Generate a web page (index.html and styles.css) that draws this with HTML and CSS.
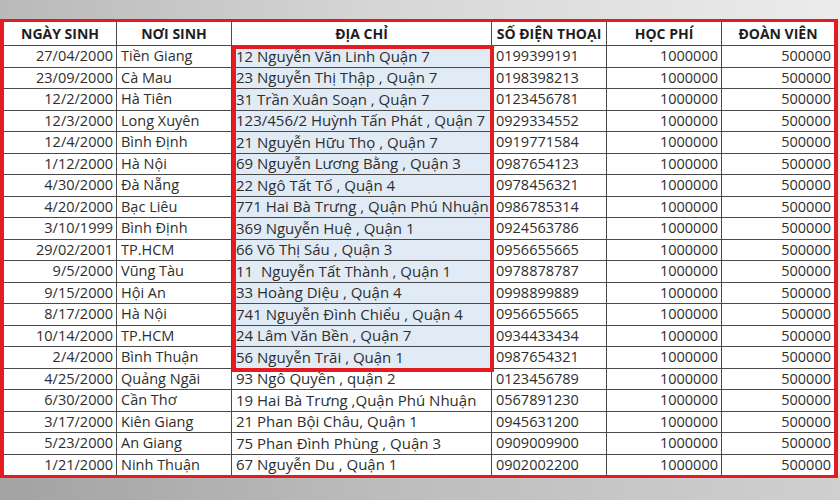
FILE: index.html
```html
<!DOCTYPE html>
<html lang="vi">
<head>
<meta charset="utf-8">
<title>Danh sách</title>
<link rel="stylesheet" href="styles.css">
</head>
<body>
<div class="page">
  <div class="frame">
    <div class="sheet">
      <div class="cell head">NGÀY SINH</div>
      <div class="cell head">NƠI SINH</div>
      <div class="cell head">ĐỊA CHỈ</div>
      <div class="cell head">SỐ ĐIỆN THOẠI</div>
      <div class="cell head">HỌC PHÍ</div>
      <div class="cell head">ĐOÀN VIÊN</div>

      <div class="cell num">27/04/2000</div><div class="cell">Tiền Giang</div><div class="cell addr hl">12 Nguyễn Văn Linh Quận 7</div><div class="cell">0199399191</div><div class="cell num">1000000</div><div class="cell num">500000</div>
      <div class="cell num">23/09/2000</div><div class="cell">Cà Mau</div><div class="cell addr hl">23 Nguyễn Thị Thập , Quận 7</div><div class="cell">0198398213</div><div class="cell num">1000000</div><div class="cell num">500000</div>
      <div class="cell num">12/2/2000</div><div class="cell">Hà Tiên</div><div class="cell addr hl">31 Trần Xuân Soạn , Quận 7</div><div class="cell">0123456781</div><div class="cell num">1000000</div><div class="cell num">500000</div>
      <div class="cell num">12/3/2000</div><div class="cell">Long Xuyên</div><div class="cell addr hl">123/456/2 Huỳnh Tấn Phát , Quận 7</div><div class="cell">0929334552</div><div class="cell num">1000000</div><div class="cell num">500000</div>
      <div class="cell num">12/4/2000</div><div class="cell">Bình Định</div><div class="cell addr hl">21 Nguyễn Hữu Thọ , Quận 7</div><div class="cell">0919771584</div><div class="cell num">1000000</div><div class="cell num">500000</div>
      <div class="cell num">1/12/2000</div><div class="cell">Hà Nội</div><div class="cell addr hl">69 Nguyễn Lương Bằng , Quận 3</div><div class="cell">0987654123</div><div class="cell num">1000000</div><div class="cell num">500000</div>
      <div class="cell num">4/30/2000</div><div class="cell">Đà Nẵng</div><div class="cell addr hl">22 Ngô Tất Tố , Quận 4</div><div class="cell">0978456321</div><div class="cell num">1000000</div><div class="cell num">500000</div>
      <div class="cell num">4/20/2000</div><div class="cell">Bạc Liêu</div><div class="cell addr hl">771 Hai Bà Trưng , Quận Phú Nhuận</div><div class="cell">0986785314</div><div class="cell num">1000000</div><div class="cell num">500000</div>
      <div class="cell num">3/10/1999</div><div class="cell">Bình Định</div><div class="cell addr hl">369 Nguyễn Huệ , Quận 1</div><div class="cell">0924563786</div><div class="cell num">1000000</div><div class="cell num">500000</div>
      <div class="cell num">29/02/2001</div><div class="cell">TP.HCM</div><div class="cell addr hl">66 Võ Thị Sáu , Quận 3</div><div class="cell">0956655665</div><div class="cell num">1000000</div><div class="cell num">500000</div>
      <div class="cell num">9/5/2000</div><div class="cell">Vũng Tàu</div><div class="cell addr hl">11&nbsp; Nguyễn Tất Thành , Quận 1</div><div class="cell">0978878787</div><div class="cell num">1000000</div><div class="cell num">500000</div>
      <div class="cell num">9/15/2000</div><div class="cell">Hội An</div><div class="cell addr hl">33 Hoàng Diệu , Quận 4</div><div class="cell">0998899889</div><div class="cell num">1000000</div><div class="cell num">500000</div>
      <div class="cell num">8/17/2000</div><div class="cell">Hà Nội</div><div class="cell addr hl">741 Nguyễn Đình Chiểu , Quận 4</div><div class="cell">0956655665</div><div class="cell num">1000000</div><div class="cell num">500000</div>
      <div class="cell num">10/14/2000</div><div class="cell">TP.HCM</div><div class="cell addr hl">24 Lâm Văn Bền , Quận 7</div><div class="cell">0934433434</div><div class="cell num">1000000</div><div class="cell num">500000</div>
      <div class="cell num">2/4/2000</div><div class="cell">Bình Thuận</div><div class="cell addr hl">56 Nguyễn Trãi , Quận 1</div><div class="cell">0987654321</div><div class="cell num">1000000</div><div class="cell num">500000</div>
      <div class="cell num">4/25/2000</div><div class="cell">Quảng Ngãi</div><div class="cell addr">93 Ngô Quyền , quận 2</div><div class="cell">0123456789</div><div class="cell num">1000000</div><div class="cell num">500000</div>
      <div class="cell num">6/30/2000</div><div class="cell">Cần Thơ</div><div class="cell addr">19 Hai Bà Trưng ,Quận Phú Nhuận</div><div class="cell">0567891230</div><div class="cell num">1000000</div><div class="cell num">500000</div>
      <div class="cell num">3/17/2000</div><div class="cell">Kiên Giang</div><div class="cell addr">21 Phan Bội Châu, Quận 1</div><div class="cell">0945631200</div><div class="cell num">1000000</div><div class="cell num">500000</div>
      <div class="cell num">5/23/2000</div><div class="cell">An Giang</div><div class="cell addr">75 Phan Đình Phùng , Quận 3</div><div class="cell">0909009900</div><div class="cell num">1000000</div><div class="cell num">500000</div>
      <div class="cell num">1/21/2000</div><div class="cell">Ninh Thuận</div><div class="cell addr">67 Nguyễn Du , Quận 1</div><div class="cell">0902002200</div><div class="cell num">1000000</div><div class="cell num">500000</div>

      <div class="mark"></div>
    </div>
  </div>
</div>
</body>
</html>
```
FILE: styles.css
```css
html, body {
  margin: 0;
  padding: 0;
}
body {
  width: 840px;
  height: 500px;
  overflow: hidden;
  font-family: "Open Sans", "Noto Sans", sans-serif;
}
.page {
  height: 500px;
  box-sizing: border-box;
  padding: 19px 2px 0 0;
  background:
    linear-gradient(to bottom, rgba(0,0,0,0) 0 470px, rgba(0,0,0,0.12) 480px, rgba(0,0,0,0.12) 100%),
    linear-gradient(to right, #b9b9b9, #d6d6d6 45%, #ececec 100%);
}
.frame {
  border: 3px solid #e41c22;
  border-left-width: 4px;
  border-right-width: 4px;
  background: #ffffff;
}
.sheet {
  position: relative;
  display: grid;
  grid-template-columns: 112px 114px 259px 114px 114px 112px;
  grid-template-rows: 23px repeat(20, 20.5px);
  gap: 1px;
  background: #4a4a4a;
}
.cell {
  background: #ffffff;
  color: #2e2e2e;
  font-size: 14.5px;
  line-height: 1;
  padding: 0 3px 0 4px;
  display: flex;
  align-items: center;
  white-space: nowrap;
  overflow: hidden;
}
.head {
  justify-content: center;
  font-weight: bold;
  color: #1e1e1e;
  font-size: 14px;
  padding: 0;
}
.num {
  justify-content: flex-end;
}
.addr {
  padding-left: 4px;
  font-size: 15px;
}
.hl {
  background: #e1ebf6;
}
.mark {
  position: absolute;
  left: 228px;
  top: 23px;
  width: 262px;
  height: 327px;
  box-sizing: border-box;
  border: 4px solid #e41c22;
  pointer-events: none;
}
```
